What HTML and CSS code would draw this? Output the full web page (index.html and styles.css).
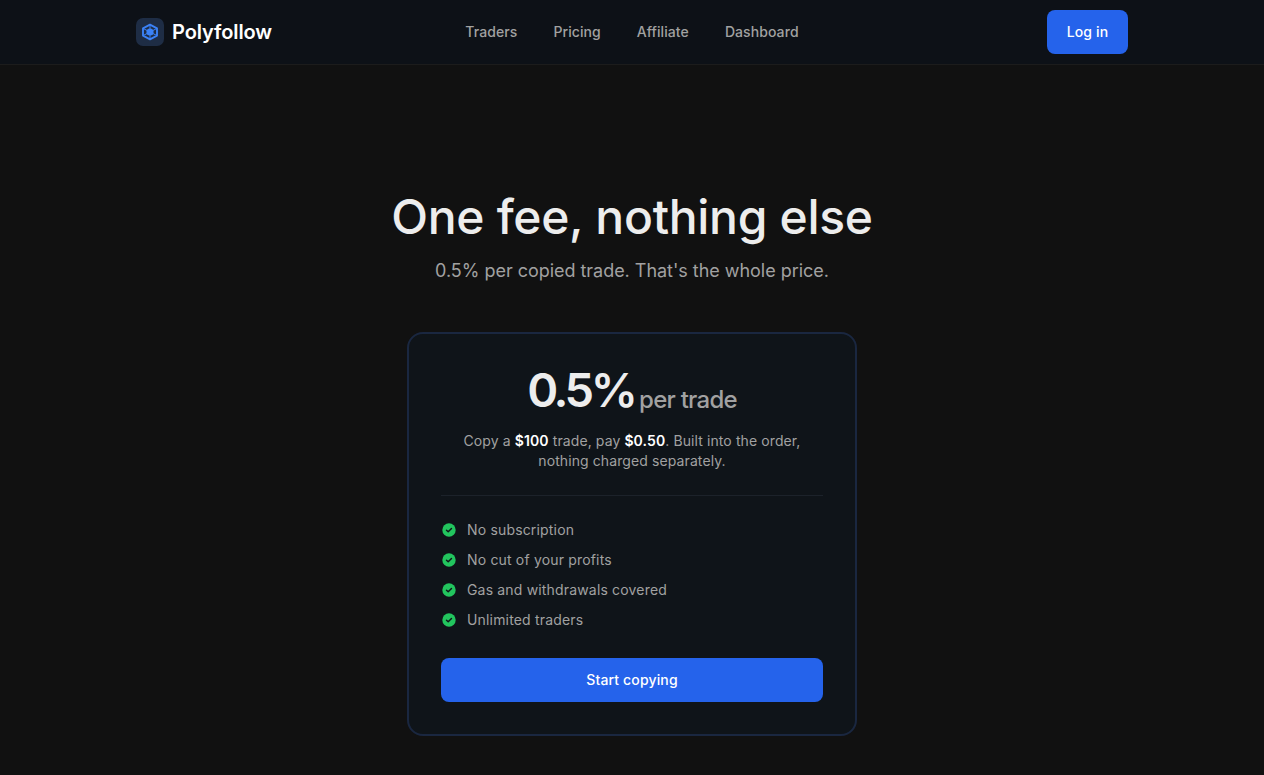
FILE: index.html
```html
<!DOCTYPE html>
<html lang="en">
<head>
    <meta charset="UTF-8">
    <meta name="viewport" content="width=device-width, initial-scale=1.0">
    <title>Polyfollow - Pricing</title>
    <link rel="stylesheet" href="styles.css">
</head>
<body>
    <header class="top-bar">
        <div class="top-bar-inner">
            <a class="brand" href="#">
                <span class="brand-mark">
                    <svg width="18" height="18" viewBox="0 0 18 18">
                        <path d="M9 1.7 16 5.4v7.2L9 16.3 2 12.6V5.4z" fill="none" stroke="#3b82f6" stroke-width="1.9" stroke-linejoin="round"/>
                        <path d="M9 1.7V16.3M2 5.4 16 12.6M16 5.4 2 12.6" stroke="#3b82f6" stroke-width="1"/>
                        <circle cx="9" cy="9" r="3.6" fill="#3b82f6"/>
                    </svg>
                </span>
                <span class="brand-name">Polyfollow</span>
            </a>
            <nav class="nav-links">
                <a href="#">Traders</a>
                <a href="#">Pricing</a>
                <a href="#">Affiliate</a>
                <a href="#">Dashboard</a>
            </nav>
            <button class="btn login-btn">Log in</button>
        </div>
    </header>
    <main class="pricing">
        <h1>One fee, nothing else</h1>
        <p class="subtitle">0.5% per copied trade. That's the whole price.</p>
        <section class="price-card">
            <div class="price-line"><span class="price">0.5%</span> <span class="price-unit">per trade</span></div>
            <p class="price-note">Copy a <strong>$100</strong> trade, pay <strong>$0.50</strong>. Built into the order, nothing charged separately.</p>
            <ul class="features">
                <li><svg class="check" width="14" height="14" viewBox="0 0 14 14"><circle cx="7" cy="7" r="6.7" fill="#22c55e"/><path d="M4.5 7.2 6.2 8.8 9.5 5.4" fill="none" stroke="#0f1419" stroke-width="1.4" stroke-linecap="round" stroke-linejoin="round"/></svg>No subscription</li>
                <li><svg class="check" width="14" height="14" viewBox="0 0 14 14"><circle cx="7" cy="7" r="6.7" fill="#22c55e"/><path d="M4.5 7.2 6.2 8.8 9.5 5.4" fill="none" stroke="#0f1419" stroke-width="1.4" stroke-linecap="round" stroke-linejoin="round"/></svg>No cut of your profits</li>
                <li><svg class="check" width="14" height="14" viewBox="0 0 14 14"><circle cx="7" cy="7" r="6.7" fill="#22c55e"/><path d="M4.5 7.2 6.2 8.8 9.5 5.4" fill="none" stroke="#0f1419" stroke-width="1.4" stroke-linecap="round" stroke-linejoin="round"/></svg>Gas and withdrawals covered</li>
                <li><svg class="check" width="14" height="14" viewBox="0 0 14 14"><circle cx="7" cy="7" r="6.7" fill="#22c55e"/><path d="M4.5 7.2 6.2 8.8 9.5 5.4" fill="none" stroke="#0f1419" stroke-width="1.4" stroke-linecap="round" stroke-linejoin="round"/></svg>Unlimited traders</li>
            </ul>
            <button class="btn start-btn">Start copying</button>
        </section>
    </main>
</body>
</html>
```
FILE: styles.css
```css
* {
    box-sizing: border-box;
}
body {
    margin: 0;
    min-height: 100vh;
    background-color: #111111;
    color: #ededed;
    font-family: Inter, "Liberation Sans", sans-serif;
    overflow: hidden;
}
.top-bar {
    height: 65px;
    background-color: #0d1117;
    border-bottom: 1px solid #1c1c1c;
}
.top-bar-inner {
    width: 992px;
    height: 64px;
    margin: 0 auto;
    display: grid;
    grid-template-columns: 1fr auto 1fr;
    align-items: center;
}
.brand {
    display: flex;
    align-items: center;
    gap: 8px;
    color: #fff;
    text-decoration: none;
}
.brand-mark {
    width: 28px;
    height: 28px;
    border-radius: 7px;
    background-color: #1e2d45;
    display: flex;
    align-items: center;
    justify-content: center;
}
.brand-name {
    font-size: 20px;
    font-weight: 600;
    letter-spacing: -0.1px;
}
.nav-links {
    display: flex;
    gap: 36px;
    padding-bottom: 2px;
}
.nav-links a {
    color: #a1a1a1;
    font-size: 14px;
    font-weight: 500;
    letter-spacing: 0.08px;
    text-decoration: none;
}
.btn {
    border: none;
    border-radius: 8px;
    background-color: #2563eb;
    color: #fff;
    font-family: inherit;
    font-size: 14px;
    font-weight: 500;
    letter-spacing: 0.15px;
    cursor: pointer;
}
.login-btn {
    width: 81px;
    height: 44px;
    padding-bottom: 2px;
    justify-self: end;
}
.pricing {
    display: flex;
    flex-direction: column;
    align-items: center;
    padding-top: 120px;
}
h1 {
    margin: 0;
    font-size: 48px;
    line-height: 64px;
    font-weight: 550;
    letter-spacing: -0.3px;
}
.subtitle {
    margin: 8px 0 0;
    color: #a1a1a1;
    font-size: 18px;
    line-height: 28px;
    letter-spacing: -0.03px;
}
.price-card {
    width: 450px;
    height: 404px;
    margin-top: 47px;
    padding: 26px 32px 32px;
    background-color: #0f1419;
    border: 2px solid #1a2740;
    border-radius: 16px;
    text-align: center;
}
.price-line {
    line-height: 60px;
}
.price {
    font-size: 47px;
    font-weight: 600;
    letter-spacing: -3.4px;
}
.price-unit {
    color: #a1a1a1;
    font-size: 24px;
    font-weight: 500;
    letter-spacing: -0.75px;
    vertical-align: -1px;
}
.price-note {
    margin: 0;
    color: #a1a1a1;
    font-size: 14px;
    line-height: 20px;
    letter-spacing: 0.1px;
}
.price-note strong {
    color: #fff;
    font-weight: 600;
}
.features {
    list-style: none;
    margin: 24px 0 0;
    padding: 19px 0 0;
    border-top: 1px solid #1c222a;
    text-align: left;
}
.features li {
    display: flex;
    align-items: center;
    gap: 11px;
    height: 30px;
    padding: 0 0 2px 1px;
    color: #a1a1a1;
    font-size: 14px;
    letter-spacing: 0.17px;
}
.check {
    margin-top: 2px;
}
.start-btn {
    display: block;
    width: 100%;
    height: 44px;
    margin-top: 23px;
    padding-bottom: 3px;
}
```
